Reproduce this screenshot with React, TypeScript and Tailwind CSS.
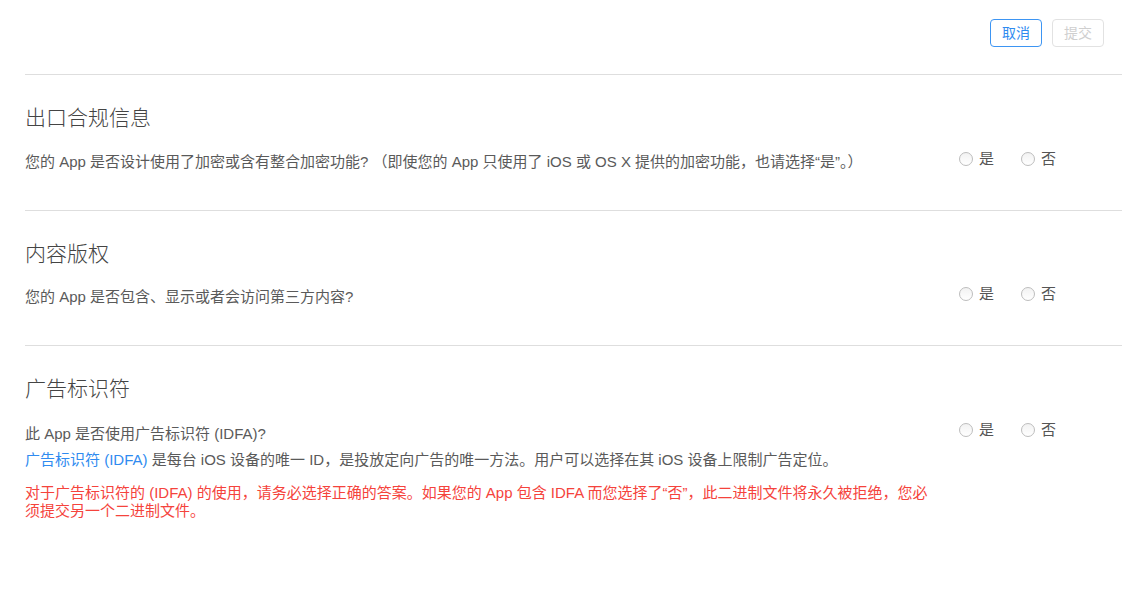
import React from "react";

const FONT = { fontFamily: '"Liberation Sans", "Noto Sans CJK SC", sans-serif' };

function Radio({ label }: { label: string }) {
  return (
    <label className="flex items-center gap-[6px] text-[15px] leading-[20px] text-[#555]">
      <span className="block h-[14px] w-[14px] rounded-full border border-[#bdbdbd] bg-gradient-to-b from-[#f2f2f2] to-white" />
      <span>{label}</span>
    </label>
  );
}

function Radios() {
  return (
    <div className="flex items-center gap-[27px] shrink-0">
      <Radio label="是" />
      <Radio label="否" />
    </div>
  );
}

function Section({ title, children, pb = "pb-[38px]" }: { title: string; children: React.ReactNode; pb?: string }) {
  return (
    <section className={`border-t border-[#dedede] pt-[28px] ${pb}`}>
      <h2 className="text-[21px] leading-[30px] font-light text-[#444]">{title}</h2>
      {children}
    </section>
  );
}

export default function App() {
  return (
    <div className="min-h-[591px] bg-white pl-[25px]" style={FONT}>
      <div className="flex justify-end gap-[10px] pt-[19px] pr-[18px] pb-[27px]">
        <button className="h-[28px] w-[52px] rounded-[4px] border border-[#3d95f3] text-[14px] text-[#2f8bf0] bg-white">
          取消
        </button>
        <button className="h-[28px] w-[52px] rounded-[4px] border border-[#e2e2e2] text-[14px] text-[#cfcfcf] bg-white">
          提交
        </button>
      </div>

      <Section title="出口合规信息">
        <div className="mt-[19px] flex items-start">
          <p className="w-[905px] shrink-0 text-[15px] leading-[20px] text-[#5a5a5a]">
            您的 App 是否设计使用了加密或含有整合加密功能? （即使您的 App 只使用了 iOS 或 OS X 提供的加密功能，也请选择“是”。）
          </p>
          <div className="ml-[29px] -mt-[3px]">
            <Radios />
          </div>
        </div>
      </Section>

      <Section title="内容版权">
        <div className="mt-[18px] flex items-start">
          <p className="w-[905px] shrink-0 text-[15px] leading-[20px] text-[#5a5a5a]">
            您的 App 是否包含、显示或者会访问第三方内容?
          </p>
          <div className="ml-[29px] -mt-[3px]">
            <Radios />
          </div>
        </div>
      </Section>

      <Section title="广告标识符" pb="pb-[40px]">
        <div className="mt-[20px] flex items-start">
          <div className="w-[905px] shrink-0 text-[15px] text-[#5a5a5a]">
            <p className="leading-[20px]">此 App 是否使用广告标识符 (IDFA)?</p>
            <p className="mt-[6px] leading-[20px]">
              <span className="text-[#2f8bf0]">广告标识符 (IDFA)</span> 是每台 iOS 设备的唯一 ID，是投放定向广告的唯一方法。用户可以选择在其 iOS 设备上限制广告定位。
            </p>
            <p className="mt-[14px] leading-[18px] text-[#f5433c]">
              对于广告标识符的 (IDFA) 的使用，请务必选择正确的答案。如果您的 App 包含 IDFA 而您选择了“否”，此二进制文件将永久被拒绝，您必须提交另一个二进制文件。
            </p>
          </div>
          <div className="ml-[29px] -mt-[4px]">
            <Radios />
          </div>
        </div>
      </Section>
    </div>
  );
}
